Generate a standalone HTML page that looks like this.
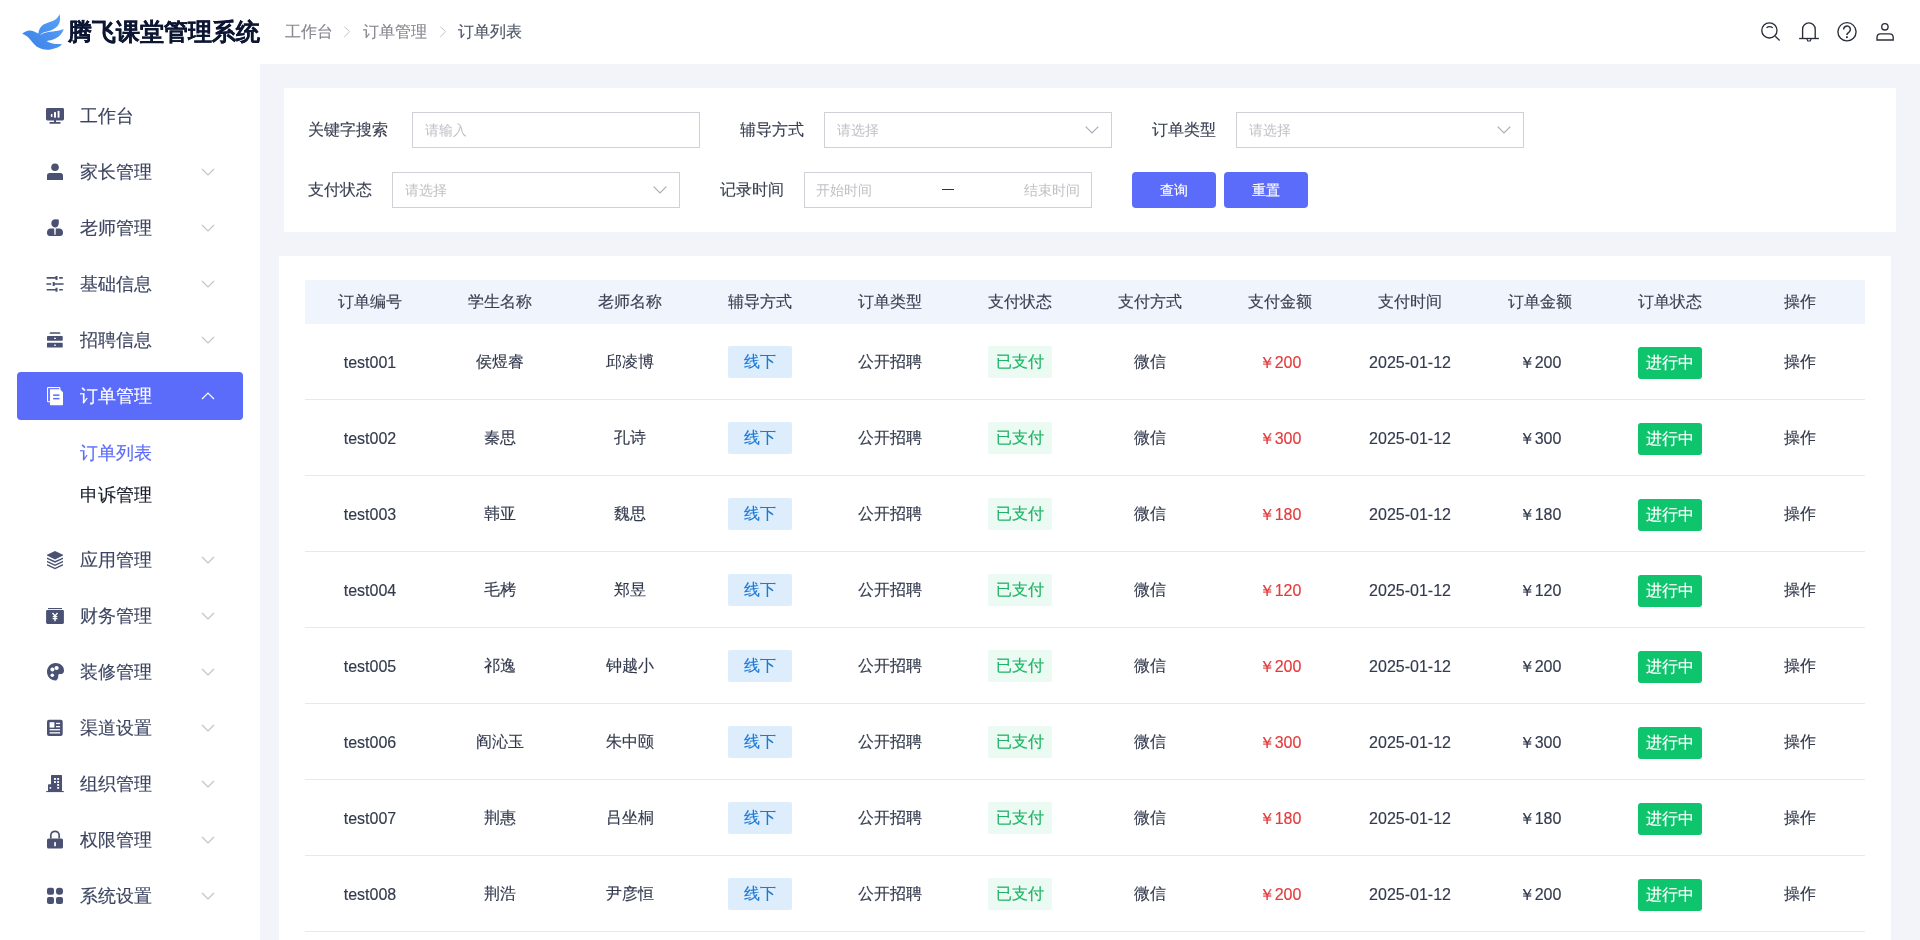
<!DOCTYPE html>
<html><head><meta charset="utf-8">
<style>
*{margin:0;padding:0;box-sizing:border-box}
html,body{width:1920px;height:940px;overflow:hidden;background:#fff;font-family:"Liberation Sans",sans-serif;}
.lbl,.ph,.bc,.t,.sub,.th,.c,.tag,.btn,#logo-text{will-change:transform}
.lbl,.t,.sub,.th,.c,.tag,.btn,.bc{-webkit-text-stroke:0.15px currentColor}
.abs{position:absolute}
#header{position:absolute;left:0;top:0;width:1920px;height:64px;background:#fff}
#logo-text{position:absolute;left:67.8px;top:15.8px;font-size:23.5px;-webkit-text-stroke:0.2px #0d1733;line-height:32px;font-weight:bold;color:#0d1733;white-space:nowrap}
.bc{position:absolute;top:20px;font-size:16px;line-height:24px;color:#86898f;white-space:nowrap}
#sidebar{position:absolute;left:0;top:64px;width:260px;height:876px;background:#fff}
.mi{position:absolute;left:17px;width:226px;height:48px;border-radius:4px}
.mi .t{position:absolute;left:63px;top:12px;font-size:17.6px;line-height:24px;color:#3d4561;white-space:nowrap}
.mi svg.ic{position:absolute;left:28px;top:12px}
.mi svg.ch{position:absolute;left:184px;top:20px}
.mi.active{background:#5b6bfa}
.mi.active .t{color:#fff}
.sub{position:absolute;left:80px;font-size:17.6px;line-height:24px;white-space:nowrap}
#content{position:absolute;left:260px;top:64px;width:1660px;height:876px;background:#f3f4f9}
#filter{position:absolute;left:284px;top:88px;width:1612px;height:144px;background:#fff}
.lbl{position:absolute;font-size:16px;line-height:24px;color:#3a3f51;white-space:nowrap}
.inp{position:absolute;height:36px;border:1px solid #cfd1d6;background:#fff}
.ph{position:absolute;font-size:14px;line-height:20px;color:#c0c1c6;white-space:nowrap}
.btn{position:absolute;top:172px;width:84px;height:36px;background:#5b6bfa;border-radius:4px;color:#fff;font-size:14px;line-height:37px;text-align:center}
#tcard{position:absolute;left:279px;top:256px;width:1612px;height:700px;background:#fff}
#thead{position:absolute;left:305px;top:280px;width:1560px;height:44px;background:#eff4fd}
.th{position:absolute;top:290px;width:130px;text-align:center;font-size:16px;line-height:24px;color:#3a3f51;white-space:nowrap}
.row{position:absolute;left:305px;width:1560px;height:76px;border-bottom:1px solid #e8e9eb}
.c{position:absolute;top:26px;width:130px;text-align:center;font-size:16px;line-height:24px;color:#333a4d;white-space:nowrap}
.tag{position:absolute;top:22px;width:64px;height:32px;line-height:32px;text-align:center;font-size:16px;border-radius:2px}
.t1{left:423px;background:#ddedfc;color:#1b7ad6}
.t2{left:683px;background:#ebfaf2;color:#1fb466}
.t3{left:1333px;background:#0ec46c;color:#fff;border-radius:3px;top:23px}
.red{color:#e5393b}
.lat{top:27px}
</style></head><body>

<div id="header">
  <svg class="abs" style="left:0;top:0" width="70" height="64" viewBox="0 0 70 64">
    <defs><linearGradient id="bg1" x1="1" y1="0" x2="0" y2="1"><stop offset="0" stop-color="#5aa3f8"/><stop offset="1" stop-color="#3a7ee6"/></linearGradient></defs>
    <path fill="url(#bg1)" d="M22.1,33.5 C24.5,32 27,30.6 29.5,30.5 C32.5,30.4 35.5,31.8 38.3,33.6 C38.8,30 40.5,26.5 43.5,24.6 C47.5,22.3 52,22 55.5,19.5 C57.5,18 58.8,16 59.4,14.1 C60.5,17.5 60.5,22 58.3,25 C56,28.2 52,30.3 47.5,31.4 C44,31.8 41.5,33 39.6,35.6 C42,33.5 45,32.3 48.5,31.9 C53.5,31.4 59,31 63.7,28.9 C62.5,33 59.5,36.5 55,38.8 C52.5,40 49.5,40.6 46.8,41 C49,43 53,44 62.1,44.2 C60,46.5 56,48.5 50.6,49.5 C46.5,50.2 42,49.6 39,47.8 C35.5,46.5 33,43 31,40.5 C29,37.8 26,35.2 22.1,33.5 Z"/>
  </svg>
  <div id="logo-text">腾飞课堂管理系统</div>
  <div class="bc" style="left:285px">工作台</div>
  <svg class="abs" style="left:343px;top:26px" width="8" height="12" viewBox="0 0 8 12"><path d="M1.2,0.4 L6.6,5.8 L1.2,11.2" fill="none" stroke="#c2c4c9" stroke-width="1"/></svg>
  <div class="bc" style="left:363px">订单管理</div>
  <svg class="abs" style="left:439px;top:26px" width="8" height="12" viewBox="0 0 8 12"><path d="M1.2,0.4 L6.6,5.8 L1.2,11.2" fill="none" stroke="#c2c4c9" stroke-width="1"/></svg>
  <div class="bc" style="left:458px;color:#4e5467">订单列表</div>

  <svg class="abs" style="left:1750px;top:10px" width="160" height="44" viewBox="1750 10 160 44" fill="none" stroke="#2a2e3a" stroke-width="1.35">
    <circle cx="1769.4" cy="30.4" r="7.6"/>
    <path d="M1775.3,36.3 L1779.6,40.6"/>
    <path d="M1766.5,27.8 Q1769.6,25.4 1772.7,27.8" stroke-width="1.4"/>
    <path d="M1802.6,38.5 L1802.6,29.2 A6.3,6.3 0 0 1 1815.2,29.2 L1815.2,38.5"/>
    <path d="M1799.1,38.5 L1818.9,38.5"/>
    <path d="M1806.9,38.8 L1807.8,41 L1810.2,41 L1811.1,38.8" stroke-width="1.2"/>
    <circle cx="1847" cy="31.8" r="9.1"/>
    <path d="M1843.6,29.4 A3.4,3.4 0 1 1 1848.8,32.3 C1847.6,33 1846.9,33.6 1846.9,35" stroke-width="1.5"/>
    <rect x="1846" y="36.3" width="1.8" height="1.8" fill="#262a36" stroke="none"/>
    <circle cx="1884.9" cy="26.8" r="3.2"/>
    <path d="M1877,40 L1877,37.5 C1877,35 1878.5,33.9 1880.5,33.9 L1889.5,33.9 C1891.5,33.9 1893.2,35 1893.2,37.5 L1893.2,40 Z"/>
  </svg>
</div>

<div id="sidebar"></div>
<!-- menu -->
<div class="mi" style="top:92px">
  <svg class="ic" width="24" height="24" viewBox="0 0 24 24" fill="#4a5173"><rect x="1" y="4" width="18" height="12.4" rx="1.4"/><rect x="9" y="16" width="2" height="2.5"/><rect x="4.3" y="18" width="11.4" height="1.7" rx="0.8"/><rect x="5.9" y="10" width="1.5" height="3" fill="#fff"/><rect x="9" y="8.1" width="2" height="5.5" fill="#fff"/><rect x="12.6" y="6.9" width="1.9" height="6.7" fill="#fff"/></svg>
  <div class="t">工作台</div>
</div>
<div class="mi" style="top:148px">
  <svg class="ic" width="24" height="24" viewBox="0 0 24 24" fill="#4a5173"><circle cx="10" cy="7.3" r="3.8"/><path d="M2,19.9 L2,15.4 C2,13.9 3,12.9 4.5,12.9 L15.5,12.9 C17,12.9 18,13.9 18,15.4 L18,19.9 Z"/></svg>
  <div class="t">家长管理</div>
  <svg class="ch" width="14" height="8" viewBox="0 0 14 8"><path d="M1,1 L7,7 L13,1" fill="none" stroke="#bfc2cc" stroke-width="1.1"/></svg>
</div>
<div class="mi" style="top:204px">
  <svg class="ic" width="24" height="24" viewBox="0 0 24 24" fill="#4a5173"><path d="M6.3,7.3 C6.3,4.8 8.2,3.3 10.5,3.3 L13.6,3.5 C14,5 14,8 13.2,9.5 C12.4,10.9 11.3,11.5 10,11.5 C7.9,11.5 6.3,9.6 6.3,7.3 Z"/><path d="M2,16.4 C2,14.3 3.6,12.6 5.6,12.6 L9.2,12.6 L9.4,18.6 C9.5,19.2 10.5,19.2 10.6,18.6 L10.8,12.6 L14.4,12.6 C16.4,12.6 18,14.3 18,16.4 L18,17.2 C18,18.8 16.8,20 15.2,20 L4.8,20 C3.2,20 2,18.8 2,17.2 Z"/></svg>
  <div class="t">老师管理</div>
  <svg class="ch" width="14" height="8" viewBox="0 0 14 8"><path d="M1,1 L7,7 L13,1" fill="none" stroke="#bfc2cc" stroke-width="1.1"/></svg>
</div>
<div class="mi" style="top:260px">
  <svg class="ic" width="24" height="24" viewBox="0 0 24 24" fill="none" stroke="#4a5173" stroke-width="1.6"><path d="M1.7,5.9 L11.5,5.9 M14.2,5.9 L17.8,5.9 M1.4,12 L6.2,12 M8.7,12 L18.6,12 M1.7,17.7 L11.5,17.7 M14.2,17.7 L17.8,17.7"/><path d="M11.5,3.9 L11.5,8 M8.7,10 L8.7,14 M11.5,15.7 L11.5,19.8" stroke-width="2"/></svg>
  <div class="t">基础信息</div>
  <svg class="ch" width="14" height="8" viewBox="0 0 14 8"><path d="M1,1 L7,7 L13,1" fill="none" stroke="#bfc2cc" stroke-width="1.1"/></svg>
</div>
<div class="mi" style="top:316px">
  <svg class="ic" width="24" height="24" viewBox="0 0 24 24" fill="#4a5173"><path d="M5.3,4.2 L14.7,4.2 L15.7,5.8 L4.3,5.8 Z"/><rect x="2" y="8.1" width="15.7" height="4.6" rx="0.6"/><rect x="2" y="14.8" width="15.7" height="4.8" rx="0.6"/><rect x="9" y="9.8" width="2" height="1.1" fill="#fff"/><rect x="9" y="16.6" width="2" height="1.1" fill="#fff"/></svg>
  <div class="t">招聘信息</div>
  <svg class="ch" width="14" height="8" viewBox="0 0 14 8"><path d="M1,1 L7,7 L13,1" fill="none" stroke="#bfc2cc" stroke-width="1.1"/></svg>
</div>
<div class="mi active" style="top:372px">
  <svg class="ic" width="24" height="24" viewBox="0 0 24 24"><rect x="2" y="3" width="13.4" height="15.3" rx="1.2" fill="#fff"/><rect x="3.1" y="4.1" width="11.2" height="13.1" fill="#5b6bfa"/><path d="M4.9,5.3 L14.7,5.3 L18,8.3 L18,20.2 C18,20.8 17.6,21.2 17,21.2 L5.9,21.2 C5.3,21.2 4.9,20.8 4.9,20.2 Z" fill="#fff"/><rect x="8.1" y="10.4" width="6.4" height="1.5" fill="#5b6bfa"/><rect x="8.1" y="13.9" width="6.4" height="1.5" fill="#5b6bfa"/></svg>
  <div class="t">订单管理</div>
  <svg class="ch" width="14" height="8" viewBox="0 0 14 8"><path d="M1,7 L7,1 L13,7" fill="none" stroke="#fff" stroke-width="1.2"/></svg>
</div>
<div class="sub" style="top:441px;color:#5b6bfa">订单列表</div>
<div class="sub" style="top:483px;color:#1a1d2b">申诉管理</div>

<div class="mi" style="top:536px">
  <svg class="ic" width="24" height="24" viewBox="0 0 24 24" fill="#4a5173"><path d="M10,3 L18,6.8 L18,7.6 L10,11.4 L2,7.6 L2,6.8 Z"/><path d="M2,9.4 L10,13.1 L18,9.4 L18,11 L10,14.7 L2,11 Z"/><path d="M2,12.7 L10,16.4 L18,12.7 L18,14.3 L10,18 L2,14.3 Z"/><path d="M2,16 L10,19.7 L18,16 L18,17.6 L10,21.3 L2,17.6 Z"/></svg>
  <div class="t">应用管理</div>
  <svg class="ch" width="14" height="8" viewBox="0 0 14 8"><path d="M1,1 L7,7 L13,1" fill="none" stroke="#bfc2cc" stroke-width="1.1"/></svg>
</div>
<div class="mi" style="top:592px">
  <svg class="ic" width="24" height="24" viewBox="0 0 24 24"><rect x="3" y="4" width="14" height="1.1" fill="#4a5173"/><rect x="1.1" y="5.9" width="17.8" height="14" rx="1.3" fill="#4a5173"/><path d="M7.5,9 L10,12 L12.5,9 M7.7,12.6 L12.3,12.6 M7.7,14.6 L12.3,14.6 M10,12 L10,17.2" fill="none" stroke="#fff" stroke-width="1.4"/></svg>
  <div class="t">财务管理</div>
  <svg class="ch" width="14" height="8" viewBox="0 0 14 8"><path d="M1,1 L7,7 L13,1" fill="none" stroke="#bfc2cc" stroke-width="1.1"/></svg>
</div>
<div class="mi" style="top:648px">
  <svg class="ic" width="24" height="24" viewBox="0 0 24 24"><path d="M10.5,3 C15.5,3 19,6.3 19,10.5 C19,12.2 18.2,13.8 16.7,14 C15.5,14.2 14.6,13.7 13.6,14.5 C12.8,15.2 13.6,16.5 13,18 C12.4,19.5 11.5,20.6 10.5,20.6 C5.8,20.6 2,16.6 2,11.8 C2,7 5.8,3 10.5,3 Z" fill="#4a5173"/><circle cx="7.4" cy="9.4" r="2" fill="#fff"/><circle cx="11.6" cy="8" r="2.1" fill="#fff"/><circle cx="7.3" cy="15.3" r="1.8" fill="#fff"/></svg>
  <div class="t">装修管理</div>
  <svg class="ch" width="14" height="8" viewBox="0 0 14 8"><path d="M1,1 L7,7 L13,1" fill="none" stroke="#bfc2cc" stroke-width="1.1"/></svg>
</div>
<div class="mi" style="top:704px">
  <svg class="ic" width="24" height="24" viewBox="0 0 24 24"><rect x="2" y="3.7" width="15.7" height="16.3" rx="2" fill="#4a5173"/><rect x="4.6" y="6.2" width="4.8" height="5.4" fill="#fff"/><rect x="11" y="6.8" width="4.1" height="1.3" fill="#fff"/><rect x="11" y="10" width="4.1" height="1.3" fill="#fff"/><rect x="4.6" y="13.1" width="10.5" height="1.3" fill="#fff"/><rect x="4.6" y="16.2" width="10.5" height="1.3" fill="#fff"/></svg>
  <div class="t">渠道设置</div>
  <svg class="ch" width="14" height="8" viewBox="0 0 14 8"><path d="M1,1 L7,7 L13,1" fill="none" stroke="#bfc2cc" stroke-width="1.1"/></svg>
</div>
<div class="mi" style="top:760px">
  <svg class="ic" width="24" height="24" viewBox="0 0 24 24"><path d="M6,4 C6,3.4 6.4,3 7,3 L16,3 C16.6,3 17,3.4 17,4 L17,19.5 L6,19.5 Z" fill="#4a5173"/><path d="M3,13.3 C3,12.6 3.5,12.3 4,12.3 L7,12.3 L7,19.5 L3,19.5 Z" fill="#4a5173"/><rect x="1.2" y="19" width="17.6" height="1.1" fill="#4a5173"/><rect x="9" y="6" width="1.9" height="1.9" fill="#fff"/><rect x="12.2" y="6" width="1.9" height="1.9" fill="#fff"/><rect x="9" y="9.1" width="1.9" height="1.9" fill="#fff"/><rect x="12.2" y="9.1" width="1.9" height="1.9" fill="#fff"/><rect x="12.2" y="12" width="1.9" height="1.9" fill="#fff"/><rect x="12.2" y="14.9" width="1.9" height="1.9" fill="#fff"/><rect x="4.6" y="15.1" width="1.6" height="1.6" fill="#fff"/></svg>
  <div class="t">组织管理</div>
  <svg class="ch" width="14" height="8" viewBox="0 0 14 8"><path d="M1,1 L7,7 L13,1" fill="none" stroke="#bfc2cc" stroke-width="1.1"/></svg>
</div>
<div class="mi" style="top:816px">
  <svg class="ic" width="24" height="24" viewBox="0 0 24 24"><path d="M5.8,10.5 L5.8,7.5 C5.8,5 7.6,3.3 10,3.3 C12.4,3.3 14.2,5 14.2,7.5 L14.2,10.5" fill="none" stroke="#4a5173" stroke-width="1.7"/><rect x="2" y="10.4" width="16" height="10.2" rx="1.6" fill="#4a5173"/><rect x="9.2" y="13.9" width="1.7" height="4.4" rx="0.6" fill="#fff"/></svg>
  <div class="t">权限管理</div>
  <svg class="ch" width="14" height="8" viewBox="0 0 14 8"><path d="M1,1 L7,7 L13,1" fill="none" stroke="#bfc2cc" stroke-width="1.1"/></svg>
</div>
<div class="mi" style="top:872px">
  <svg class="ic" width="24" height="24" viewBox="0 0 24 24" fill="#4a5173"><rect x="2" y="3.7" width="7" height="7" rx="2"/><rect x="11" y="3.7" width="7" height="7" rx="3"/><rect x="2" y="12.9" width="7" height="7" rx="2"/><rect x="11" y="12.9" width="7" height="7" rx="2"/></svg>
  <div class="t">系统设置</div>
  <svg class="ch" width="14" height="8" viewBox="0 0 14 8"><path d="M1,1 L7,7 L13,1" fill="none" stroke="#bfc2cc" stroke-width="1.1"/></svg>
</div>

<div id="content"></div>
<div id="filter"></div>
<div class="lbl" style="left:308px;top:118px">关键字搜索</div>
<div class="inp" style="left:412px;top:112px;width:288px"></div>
<div class="ph" style="left:425px;top:120px">请输入</div>

<div class="lbl" style="left:740px;top:118px">辅导方式</div>
<div class="inp" style="left:824px;top:112px;width:288px"></div>
<div class="ph" style="left:837px;top:120px">请选择</div>
<svg class="abs" style="left:1085px;top:126px" width="14" height="8" viewBox="0 0 14 8"><path d="M0.7,0.7 L7,7 L13.3,0.7" fill="none" stroke="#a9adb6" stroke-width="1.2"/></svg>

<div class="lbl" style="left:1152px;top:118px">订单类型</div>
<div class="inp" style="left:1236px;top:112px;width:288px"></div>
<div class="ph" style="left:1249px;top:120px">请选择</div>
<svg class="abs" style="left:1497px;top:126px" width="14" height="8" viewBox="0 0 14 8"><path d="M0.7,0.7 L7,7 L13.3,0.7" fill="none" stroke="#a9adb6" stroke-width="1.2"/></svg>

<div class="lbl" style="left:308px;top:178px">支付状态</div>
<div class="inp" style="left:392px;top:172px;width:288px"></div>
<div class="ph" style="left:405px;top:180px">请选择</div>
<svg class="abs" style="left:653px;top:186px" width="14" height="8" viewBox="0 0 14 8"><path d="M0.7,0.7 L7,7 L13.3,0.7" fill="none" stroke="#a9adb6" stroke-width="1.2"/></svg>

<div class="lbl" style="left:720px;top:178px">记录时间</div>
<div class="inp" style="left:804px;top:172px;width:288px"></div>
<div class="ph" style="left:816px;top:180px">开始时间</div>
<div class="abs" style="left:942px;top:189px;width:12px;height:1px;background:#333"></div>
<div class="ph" style="left:1024px;top:180px">结束时间</div>

<div class="btn" style="left:1132px">查询</div>
<div class="btn" style="left:1224px">重置</div>

<div id="tcard"></div>
<div id="thead"></div>
<div class="th" style="left:305px">订单编号</div>
<div class="th" style="left:435px">学生名称</div>
<div class="th" style="left:565px">老师名称</div>
<div class="th" style="left:695px">辅导方式</div>
<div class="th" style="left:825px">订单类型</div>
<div class="th" style="left:955px">支付状态</div>
<div class="th" style="left:1085px">支付方式</div>
<div class="th" style="left:1215px">支付金额</div>
<div class="th" style="left:1345px">支付时间</div>
<div class="th" style="left:1475px">订单金额</div>
<div class="th" style="left:1605px">订单状态</div>
<div class="th" style="left:1735px">操作</div>

<div id="rows">
<div class="row" style="top:324px"><div class="c lat" style="left:0">test001</div><div class="c" style="left:130px">侯煜睿</div><div class="c" style="left:260px">邱凌博</div><div class="tag t1">线下</div><div class="c" style="left:520px">公开招聘</div><div class="tag t2">已支付</div><div class="c" style="left:780px">微信</div><div class="c red lat" style="left:910px">￥200</div><div class="c lat" style="left:1040px">2025-01-12</div><div class="c lat" style="left:1170px">￥200</div><div class="tag t3">进行中</div><div class="c" style="left:1430px">操作</div></div>
<div class="row" style="top:400px"><div class="c lat" style="left:0">test002</div><div class="c" style="left:130px">秦思</div><div class="c" style="left:260px">孔诗</div><div class="tag t1">线下</div><div class="c" style="left:520px">公开招聘</div><div class="tag t2">已支付</div><div class="c" style="left:780px">微信</div><div class="c red lat" style="left:910px">￥300</div><div class="c lat" style="left:1040px">2025-01-12</div><div class="c lat" style="left:1170px">￥300</div><div class="tag t3">进行中</div><div class="c" style="left:1430px">操作</div></div>
<div class="row" style="top:476px"><div class="c lat" style="left:0">test003</div><div class="c" style="left:130px">韩亚</div><div class="c" style="left:260px">魏思</div><div class="tag t1">线下</div><div class="c" style="left:520px">公开招聘</div><div class="tag t2">已支付</div><div class="c" style="left:780px">微信</div><div class="c red lat" style="left:910px">￥180</div><div class="c lat" style="left:1040px">2025-01-12</div><div class="c lat" style="left:1170px">￥180</div><div class="tag t3">进行中</div><div class="c" style="left:1430px">操作</div></div>
<div class="row" style="top:552px"><div class="c lat" style="left:0">test004</div><div class="c" style="left:130px">毛栲</div><div class="c" style="left:260px">郑昱</div><div class="tag t1">线下</div><div class="c" style="left:520px">公开招聘</div><div class="tag t2">已支付</div><div class="c" style="left:780px">微信</div><div class="c red lat" style="left:910px">￥120</div><div class="c lat" style="left:1040px">2025-01-12</div><div class="c lat" style="left:1170px">￥120</div><div class="tag t3">进行中</div><div class="c" style="left:1430px">操作</div></div>
<div class="row" style="top:628px"><div class="c lat" style="left:0">test005</div><div class="c" style="left:130px">祁逸</div><div class="c" style="left:260px">钟越小</div><div class="tag t1">线下</div><div class="c" style="left:520px">公开招聘</div><div class="tag t2">已支付</div><div class="c" style="left:780px">微信</div><div class="c red lat" style="left:910px">￥200</div><div class="c lat" style="left:1040px">2025-01-12</div><div class="c lat" style="left:1170px">￥200</div><div class="tag t3">进行中</div><div class="c" style="left:1430px">操作</div></div>
<div class="row" style="top:704px"><div class="c lat" style="left:0">test006</div><div class="c" style="left:130px">阎沁玉</div><div class="c" style="left:260px">朱中颐</div><div class="tag t1">线下</div><div class="c" style="left:520px">公开招聘</div><div class="tag t2">已支付</div><div class="c" style="left:780px">微信</div><div class="c red lat" style="left:910px">￥300</div><div class="c lat" style="left:1040px">2025-01-12</div><div class="c lat" style="left:1170px">￥300</div><div class="tag t3">进行中</div><div class="c" style="left:1430px">操作</div></div>
<div class="row" style="top:780px"><div class="c lat" style="left:0">test007</div><div class="c" style="left:130px">荆惠</div><div class="c" style="left:260px">吕坐桐</div><div class="tag t1">线下</div><div class="c" style="left:520px">公开招聘</div><div class="tag t2">已支付</div><div class="c" style="left:780px">微信</div><div class="c red lat" style="left:910px">￥180</div><div class="c lat" style="left:1040px">2025-01-12</div><div class="c lat" style="left:1170px">￥180</div><div class="tag t3">进行中</div><div class="c" style="left:1430px">操作</div></div>
<div class="row" style="top:856px"><div class="c lat" style="left:0">test008</div><div class="c" style="left:130px">荆浩</div><div class="c" style="left:260px">尹彦恒</div><div class="tag t1">线下</div><div class="c" style="left:520px">公开招聘</div><div class="tag t2">已支付</div><div class="c" style="left:780px">微信</div><div class="c red lat" style="left:910px">￥200</div><div class="c lat" style="left:1040px">2025-01-12</div><div class="c lat" style="left:1170px">￥200</div><div class="tag t3">进行中</div><div class="c" style="left:1430px">操作</div></div>
</div>
</body></html>
